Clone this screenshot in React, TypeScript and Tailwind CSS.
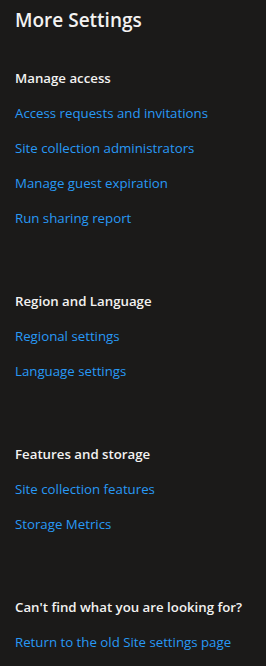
const sections = [
  {
    title: "Manage access",
    links: [
      "Access requests and invitations",
      "Site collection administrators",
      "Manage guest expiration",
      "Run sharing report",
    ],
  },
  {
    title: "Region and Language",
    links: ["Regional settings", "Language settings"],
  },
  {
    title: "Features and storage",
    links: ["Site collection features", "Storage Metrics"],
  },
  {
    title: "Can't find what you are looking for?",
    links: ["Return to the old Site settings page"],
  },
];

export default function App() {
  return (
    <div
      className="w-[266px] min-h-[666px] bg-[#1b1a19] px-[15px] text-[#f3f2f1]"
      style={{ fontFamily: '"Segoe UI", "Open Sans", "Noto Sans", sans-serif' }}
    >
      <h1 className="h-[40px] flex items-center text-[19px] font-semibold">More Settings</h1>
      <div className="mt-[21px] flex flex-col gap-[48px]">
        {sections.map((section, i) => (
          <div key={i} className="flex flex-col">
            <p className="h-[35px] flex items-center text-[13.25px] font-semibold">{section.title}</p>
            {section.links.map((link, j) => (
              <a key={j} href="#" className="h-[35px] flex items-center text-[13.25px] text-[#2899f5]">
                {link}
              </a>
            ))}
          </div>
        ))}
      </div>
    </div>
  );
}
